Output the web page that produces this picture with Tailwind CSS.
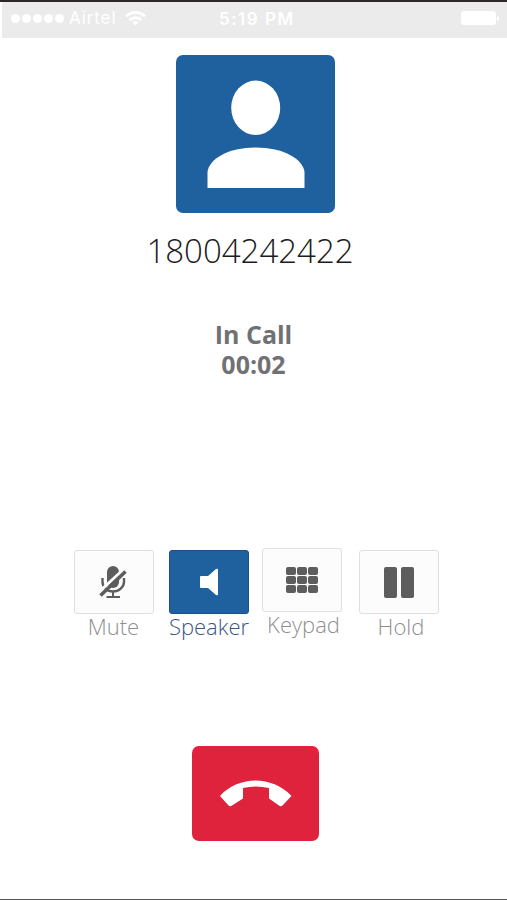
<!DOCTYPE html>
<html lang="en">
<head>
  <meta charset="UTF-8" />
  <meta name="viewport" content="width=device-width, initial-scale=1.0">
  <title>In Call</title>
  <script src="https://cdn.jsdelivr.net/npm/@tailwindcss/browser@4"></script>
</head>
<body class="bg-white font-['Open_Sans',sans-serif]">
  <div class="flex h-[900px] w-[507px] flex-col items-center overflow-hidden border-t-2 border-b border-t-[#2b2729] border-b-[#555]">

    <!-- Status bar -->
    <header class="flex h-9 w-full shrink-0 pl-0.5">
      <div class="grid w-full grid-cols-[217px_1fr_46px] bg-[#ebebeb] pb-1 text-white">
        <div class="flex items-center pl-[9px]">
          <div class="flex gap-[2px]">
            <span class="size-[9px] rounded-full bg-white"></span>
            <span class="size-[9px] rounded-full bg-white"></span>
            <span class="size-[9px] rounded-full bg-white"></span>
            <span class="size-[9px] rounded-full bg-white"></span>
            <span class="size-[9px] rounded-full bg-white"></span>
          </div>
          <span class="ml-[5px] w-[56px] font-[Inter,sans-serif] text-[17px] leading-5 tracking-[0.9px]">Airtel</span>
          <svg class="h-[15px] w-[21px]" viewBox="0 0 21 15" fill="none" stroke="#fff" stroke-width="2.5">
            <path d="M1 5.2Q10.500-2.400 20 5.200M4.500 9Q10.500 4.200 16.500 9" />
            <path d="M7.300 11.200Q10.500 8.800 13.700 11.200L10.500 14.600Z" fill="#fff" stroke="none" />
          </svg>
        </div>
        <span class="mt-[2px] self-center font-[Inter,sans-serif] text-[17px] leading-5 font-semibold tracking-[1.5px]">5:19 PM</span>
        <div class="flex items-center gap-[1px]">
          <span class="h-[14px] w-[35px] rounded-[3px] bg-white"></span>
          <span class="h-[5px] w-[2px] rounded-r-full bg-white"></span>
        </div>
      </div>
    </header>

    <!-- Caller -->
    <div class="mt-[17px] mr-[-4px] flex h-[158px] w-[159px] shrink-0 rounded-[7px] bg-[#1f609f]">
      <svg class="h-[158px] w-[159px]" viewBox="0 0 159 158" fill="#fff">
        <ellipse cx="79.700" cy="52.800" rx="24.500" ry="27.200" />
        <path d="M31.500 133V117C33 104 52 92.500 79.700 92.500S127 104 128.500 117V133Z" />
      </svg>
    </div>
    <h1 class="mt-[18px] mr-[7px] text-[33px] leading-10 font-light text-[#1c1c1c]">18004242422</h1>
    <div class="mt-[48px] text-center text-[25px] leading-[30px] font-bold text-[#707174]">
      <p>In Call</p>
      <p>00:02</p>
    </div>

    <!-- Call controls -->
    <div class="mt-[169px] grid w-full grid-cols-[80px_80px_80px_80px] gap-x-[15px] pl-[74px] text-[22px] leading-6 font-light text-[#8f8f8f]">
      <div class="mt-[2px] flex flex-col items-center">
        <button class="flex h-16 w-20 items-center justify-center rounded-[3px] border border-[#e0e0e0] bg-[#fcfcfc]">
          <svg class="h-[34px] w-[30px]" viewBox="0 0 30 34" fill="none">
            <rect x="8" y="1" width="12" height="22" rx="6" fill="#5d5d5d" />
            <path d="M3.500 13V17C3.500 22 8 26.500 14 26.500S25 22 25 17V13" stroke="#5d5d5d" stroke-width="2.400" />
            <path d="M14 26V32M7.500 32H21" stroke="#5d5d5d" stroke-width="2" />
            <path d="M-1 28L25.500 3.500" stroke="#fcfcfc" stroke-width="3" />
            <path d="M1.500 30.500L26.500 6.500" stroke="#5d5d5d" stroke-width="3.600" />
          </svg>
        </button>
        <span class="-ml-px">Mute</span>
      </div>
      <div class="mt-[2px] flex flex-col items-center">
        <button class="flex h-16 w-20 items-center justify-center rounded-[3px] border border-[#1b5089] bg-[#1f609f]">
          <svg class="h-7 w-[18px]" viewBox="0 0 18 28" fill="#fff">
            <path d="M1 8H8L16 1Q18 0 18 2V26Q18 28 16 27L8 20H1Q0 20 0 19V9Q0 8 1 8Z" />
          </svg>
        </button>
        <span class="text-[#3c5688]">Speaker</span>
      </div>
      <div class="-ml-[2px] flex w-20 flex-col items-center">
        <button class="flex h-16 w-20 items-center justify-center rounded-[3px] border border-[#e0e0e0] bg-[#fcfcfc]">
          <span class="grid grid-cols-3 gap-px">
            <span class="h-2 w-[10px] rounded-[2px] bg-[#5d5d5d]"></span>
            <span class="h-2 w-[10px] rounded-[2px] bg-[#5d5d5d]"></span>
            <span class="h-2 w-[10px] rounded-[2px] bg-[#5d5d5d]"></span>
            <span class="h-2 w-[10px] rounded-[2px] bg-[#5d5d5d]"></span>
            <span class="h-2 w-[10px] rounded-[2px] bg-[#5d5d5d]"></span>
            <span class="h-2 w-[10px] rounded-[2px] bg-[#5d5d5d]"></span>
            <span class="h-2 w-[10px] rounded-[2px] bg-[#5d5d5d]"></span>
            <span class="h-2 w-[10px] rounded-[2px] bg-[#5d5d5d]"></span>
            <span class="h-2 w-[10px] rounded-[2px] bg-[#5d5d5d]"></span>
          </span>
        </button>
        <span class="ml-[3px]">Keypad</span>
      </div>
      <div class="mt-[2px] flex w-20 flex-col items-center">
        <button class="flex h-16 w-20 items-center justify-center gap-1 rounded-[3px] border border-[#e0e0e0] bg-[#fcfcfc]">
          <span class="h-[31px] w-[13px] rounded-[2px] bg-[#5d5d5d]"></span>
          <span class="h-[31px] w-[13px] rounded-[2px] bg-[#5d5d5d]"></span>
        </button>
        <span class="ml-[4px]">Hold</span>
      </div>
    </div>

    <!-- Hang up -->
    <button class="mt-[108px] mr-[-4px] flex h-[95px] w-[127px] shrink-0 items-center justify-center rounded-[7px] bg-[#df233d]">
      <svg class="h-[28px] w-[74px]" viewBox="0 0 74 28" fill="#fff">
        <path d="M1 16C10 5.500 24 0.500 36.500 0.500S63 5.500 72.500 16L63.500 25.500Q62 27 60 25.500L50 18.500V8Q36.500 5 24 8V18.500L13 25.500Q11 27 9.500 25.500Z" />
      </svg>
    </button>
  </div>
</body>
</html>
